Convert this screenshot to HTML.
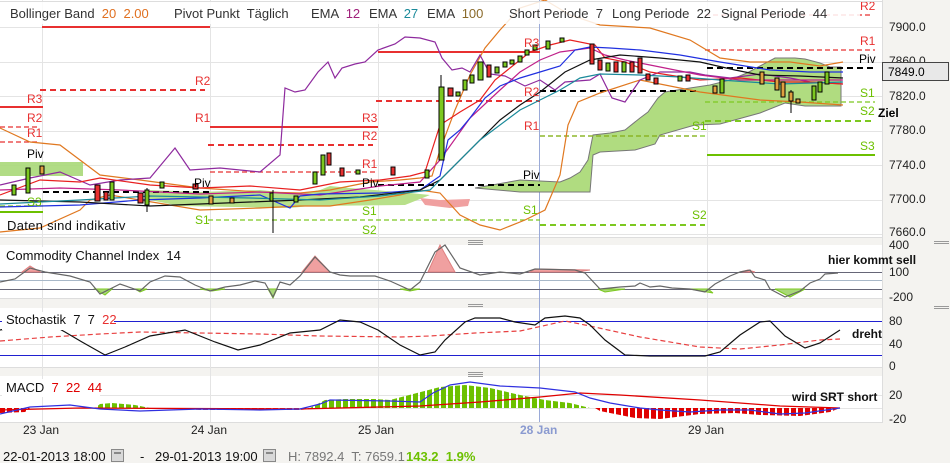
<!DOCTYPE html>
<html><head><meta charset="utf-8"><style>
body{margin:0;width:950px;height:463px;overflow:hidden;background:#f4f3f0;font-family:"Liberation Sans",sans-serif}
svg{position:absolute;left:0;top:0}
text{font-family:"Liberation Sans",sans-serif;white-space:pre}
</style></head><body>
<svg width="950" height="463" viewBox="0 0 950 463" xml:space="preserve">
<defs>
<pattern id="gb" width="7" height="10" patternUnits="userSpaceOnUse"><rect x="0" y="0" width="5" height="10" fill="#6cc000"/></pattern>
<pattern id="rb" width="7" height="10" patternUnits="userSpaceOnUse"><rect x="0" y="0" width="5" height="10" fill="#e00000"/></pattern>
</defs>
<rect x="0" y="0" width="882" height="237" fill="#fff"/>
<rect x="0" y="245" width="882" height="53" fill="#fff"/>
<rect x="0" y="308" width="882" height="59" fill="#fff"/>
<rect x="0" y="376" width="882" height="46" fill="#fff"/>
<line x1="0" y1="237.5" x2="882" y2="237.5" stroke="#ddd"/>
<line x1="0" y1="298.5" x2="882" y2="298.5" stroke="#ddd"/>
<line x1="0" y1="367.5" x2="882" y2="367.5" stroke="#ddd"/>
<line x1="0" y1="422.5" x2="882" y2="422.5" stroke="#ddd"/>
<line x1="882.5" y1="0" x2="882.5" y2="423" stroke="#ddd"/>
<g stroke="#999" stroke-width="1">
<line x1="468" y1="240.5" x2="483" y2="240.5"/><line x1="468" y1="242.5" x2="483" y2="242.5"/><line x1="468" y1="244.5" x2="483" y2="244.5"/>
<line x1="468" y1="304.5" x2="483" y2="304.5"/><line x1="468" y1="306.5" x2="483" y2="306.5"/>
<line x1="468" y1="372.5" x2="483" y2="372.5"/><line x1="468" y1="374.5" x2="483" y2="374.5"/><line x1="468" y1="376.5" x2="483" y2="376.5"/>
<line x1="934" y1="241.5" x2="949" y2="241.5"/><line x1="934" y1="243.5" x2="949" y2="243.5"/>
<line x1="934" y1="306.5" x2="949" y2="306.5"/><line x1="934" y1="308.5" x2="949" y2="308.5"/>
</g>
<g stroke="#e4e4e4" stroke-width="1">
<line x1="0" y1="27.5" x2="882" y2="27.5"/><line x1="0" y1="62.5" x2="882" y2="62.5"/><line x1="0" y1="96.5" x2="882" y2="96.5"/><line x1="0" y1="131.5" x2="882" y2="131.5"/><line x1="0" y1="165.5" x2="882" y2="165.5"/><line x1="0" y1="200.5" x2="882" y2="200.5"/><line x1="0" y1="234.5" x2="882" y2="234.5"/>
<line x1="42.5" y1="0" x2="42.5" y2="422"/><line x1="210.5" y1="0" x2="210.5" y2="422"/><line x1="378.5" y1="0" x2="378.5" y2="422"/><line x1="707.5" y1="0" x2="707.5" y2="422"/>
<line x1="0" y1="272.5" x2="882" y2="272.5"/><line x1="0" y1="280.5" x2="882" y2="280.5"/><line x1="0" y1="289.5" x2="882" y2="289.5"/>
<line x1="0" y1="344.5" x2="882" y2="344.5"/><line x1="0" y1="395.5" x2="882" y2="395.5"/><line x1="0" y1="408.5" x2="882" y2="408.5"/>
</g>
<line x1="539.5" y1="0" x2="539.5" y2="422" stroke="#9aaad8"/>
<path d="M0 162 L83 162 L83 176 L0 176Z" fill="#a8d878" opacity=".9"/>
<polygon points="150,190 200,192 260,190 300,194 320,190 330,186 350,188 410,193 430,195 405,205 310,206 290,208 180,206 150,200" fill="#b8e08a"/>
<polygon points="420,198 440,200 470,199 468,206 450,208 425,205" fill="#f0a0a0"/>
<polygon points="475,188 520,180 560,182 570,178 580,172 588,160 593,135 610,133 625,130 640,118 648,112 658,98 665,92 690,88 710,85 730,80 747,73 760,66 775,58 795,58 805,59 820,63 830,67 841,67 841,106 820,106 805,106 785,103 760,113 720,124 695,125 660,135 655,144 635,150 600,152 593,155 590,192 520,192" fill="#b0dc80" stroke="#777" stroke-width="1"/>
<g stroke-width="2" fill="none">
<line x1="42" y1="27" x2="210" y2="27" stroke="#e83030"/>
<line x1="0" y1="107" x2="43" y2="107" stroke="#e83030"/>
<line x1="210" y1="127" x2="378" y2="127" stroke="#e83030"/>
<line x1="378" y1="52" x2="540" y2="52" stroke="#e83030"/>
<line x1="0" y1="212" x2="43" y2="212" stroke="#6cc000"/>
<line x1="707" y1="155" x2="875" y2="155" stroke="#6cc000"/>
</g>
<g stroke-width="2" fill="none" stroke-dasharray="6,4">
<line x1="40" y1="90" x2="205" y2="90" stroke="#e83030"/>
<line x1="208" y1="145" x2="373" y2="145" stroke="#e83030"/>
<line x1="376" y1="101" x2="540" y2="101" stroke="#e83030"/>
<line x1="43" y1="192" x2="210" y2="192" stroke="#000"/>
<line x1="378" y1="185" x2="540" y2="185" stroke="#000"/>
<line x1="540" y1="91" x2="700" y2="91" stroke="#000"/>
<line x1="707" y1="68" x2="875" y2="68" stroke="#000"/>
<line x1="540" y1="225" x2="705" y2="225" stroke="#7cc820"/>
<line x1="705" y1="121" x2="875" y2="121" stroke="#7cc820"/>
</g>
<g stroke-width="1.3" fill="none" stroke-dasharray="5,3">
<line x1="0" y1="127" x2="40" y2="127" stroke="#e83030"/>
<line x1="0" y1="142" x2="40" y2="142" stroke="#e83030"/>
<line x1="210" y1="172" x2="378" y2="172" stroke="#e83030"/>
<line x1="540" y1="136" x2="700" y2="136" stroke="#e83030"/>
<line x1="705" y1="50" x2="875" y2="50" stroke="#e83030"/>
<line x1="705" y1="15" x2="872" y2="15" stroke="#e83030"/>
<line x1="208" y1="220" x2="540" y2="220" stroke="#7cc820"/>
<line x1="540" y1="136" x2="705" y2="136" stroke="#7cc820"/>
<line x1="705" y1="102" x2="875" y2="102" stroke="#7cc820"/>
<line x1="0" y1="206" x2="43" y2="206" stroke="#7cc820"/>
</g>
<g fill="none" stroke-width="1.2">
<polyline stroke="#e07820" points="0,128 30,142 60,145 80,160 100,175 140,180 200,188 260,192 300,193 330,190 370,182 400,180 420,178 432,176 440,150 455,110 470,75 485,48 500,30 520,8 545,0 570,15 600,25 650,28 690,40 720,58 750,62 790,62 820,66 843,62"/>
<polyline stroke="#e07820" points="0,232 40,228 80,210 90,200 110,195 200,210 260,208 300,206 330,206 370,200 400,195 420,190 440,193 460,215 480,225 500,230 525,220 545,210 560,175 568,125 578,102 600,93 640,80 700,92 760,100 800,102 843,105"/>
<polyline stroke="#8e2a9e" points="0,185 30,178 60,172 90,185 120,180 150,178 165,160 175,148 190,170 220,168 260,172 280,155 285,88 295,92 305,90 318,72 328,62 335,78 342,68 355,64 365,62 378,50 395,44 405,37 420,38 435,42 442,58 452,70 462,68 470,72 480,55 490,74 505,76 525,86 540,80 555,90 565,82 590,80 600,74 612,98 625,102 640,80 660,72 690,72 705,75 730,78 760,74 790,78 810,82 843,84"/>
<polyline stroke="#e82020" points="0,195 40,180 80,182 100,178 150,185 200,188 250,186 300,190 340,182 380,180 410,176 425,172 440,125 460,112 480,100 495,80 510,68 530,52 550,45 570,40 595,45 605,58 625,62 650,72 700,80 740,78 780,82 810,82 843,84"/>
<polyline stroke="#c0208a" points="0,190 60,188 120,190 200,194 260,192 320,195 380,186 420,182 440,160 470,118 500,90 520,72 540,60 560,52 590,48 605,55 625,60 650,65 700,75 740,80 790,80 843,80"/>
<polyline stroke="#2030e0" points="0,207 80,205 140,200 200,198 260,195 290,208 300,196 320,194 380,193 420,190 440,176 448,140 460,130 470,118 485,98 500,86 520,78 540,72 560,66 575,50 590,47 610,48 640,50 680,55 720,62 770,70 810,72 843,72"/>
<polyline stroke="#111" points="0,200 80,202 150,206 250,202 300,200 360,197 420,190 440,180 470,150 500,120 520,105 540,92 565,72 590,60 620,55 660,58 700,62 735,70 760,75 800,76 843,78"/>
<polyline stroke="#1a8a9a" points="0,204 80,200 150,196 250,198 320,200 380,196 430,190 450,170 480,140 520,110 540,100 560,90 580,78 600,74 640,75 680,77 720,80 780,84 843,82"/>
</g>
<g stroke="#000" stroke-width="1">
<line x1="441" y1="75" x2="441" y2="160"/><rect x="439" y="87" width="5" height="73" fill="#7cc820"/>
<rect x="448" y="88" width="5" height="8" fill="#e83030"/><rect x="456" y="92" width="4" height="4" fill="#7cc820"/>
<rect x="463" y="80" width="4" height="10" fill="#7cc820"/><rect x="470" y="75" width="4" height="8" fill="#7cc820"/>
<rect x="478" y="62" width="5" height="18" fill="#7cc820"/><rect x="487" y="65" width="4" height="12" fill="#e83030"/>
<rect x="495" y="67" width="4" height="6" fill="#7cc820"/><rect x="503" y="62" width="4" height="5" fill="#7cc820"/>
<rect x="510" y="60" width="4" height="4" fill="#7cc820"/><rect x="518" y="56" width="4" height="6" fill="#7cc820"/>
<rect x="525" y="50" width="4" height="5" fill="#7cc820"/><rect x="533" y="45" width="4" height="5" fill="#7cc820"/>
<rect x="546" y="41" width="4" height="8" fill="#7cc820"/><rect x="560" y="38" width="4" height="4" fill="#7cc820"/>
<rect x="590" y="44" width="4" height="20" fill="#e83030"/><rect x="598" y="60" width="4" height="10" fill="#e83030"/>
<rect x="606" y="63" width="4" height="8" fill="#7cc820"/><rect x="614" y="62" width="4" height="10" fill="#e83030"/>
<rect x="622" y="62" width="4" height="10" fill="#7cc820"/><rect x="630" y="62" width="4" height="10" fill="#e83030"/>
<rect x="638" y="58" width="4" height="15" fill="#e83030"/><rect x="646" y="74" width="4" height="6" fill="#e83030"/>
<rect x="654" y="78" width="4" height="6" fill="#e83030"/><rect x="678" y="76" width="4" height="5" fill="#7cc820"/>
<rect x="686" y="75" width="4" height="6" fill="#e83030"/><rect x="713" y="86" width="4" height="7" fill="#e0a040"/>
<rect x="720" y="79" width="4" height="14" fill="#7cc820"/><rect x="760" y="72" width="4" height="12" fill="#e0a040"/>
<rect x="775" y="78" width="4" height="12" fill="#e0a040"/><rect x="781" y="82" width="4" height="15" fill="#e0a040"/>
<line x1="791" y1="90" x2="791" y2="113"/><rect x="789" y="92" width="4" height="9" fill="#e0a040"/>
<rect x="796" y="99" width="4" height="4" fill="#e0a040"/><rect x="812" y="86" width="4" height="14" fill="#7cc820"/>
<rect x="818" y="82" width="4" height="10" fill="#7cc820"/><rect x="825" y="72" width="4" height="12" fill="#7cc820"/>
<rect x="26" y="168" width="4" height="25" fill="#7cc820"/><rect x="40" y="166" width="4" height="8" fill="#e0a040"/>
<rect x="12" y="185" width="4" height="10" fill="#7cc820"/>
<rect x="95" y="185" width="5" height="16" fill="#e83030"/><rect x="104" y="192" width="4" height="8" fill="#e83030"/>
<rect x="110" y="182" width="4" height="18" fill="#7cc820"/><rect x="138" y="193" width="5" height="10" fill="#e83030"/>
<line x1="147" y1="188" x2="147" y2="212"/><rect x="145" y="190" width="4" height="15" fill="#7cc820"/>
<rect x="160" y="182" width="4" height="6" fill="#7cc820"/><rect x="193" y="184" width="5" height="5" fill="#e83030"/>
<rect x="209" y="196" width="4" height="8" fill="#e0a040"/><rect x="230" y="198" width="4" height="5" fill="#e0a040"/>
<rect x="270" y="193" width="3" height="8" fill="#7cc820"/><line x1="273" y1="190" x2="273" y2="233"/>
<rect x="294" y="196" width="4" height="6" fill="#7cc820"/><rect x="313" y="172" width="4" height="12" fill="#7cc820"/>
<rect x="321" y="155" width="4" height="20" fill="#7cc820"/><rect x="327" y="153" width="4" height="12" fill="#e83030"/>
<rect x="340" y="168" width="4" height="8" fill="#e83030"/><rect x="356" y="170" width="4" height="4" fill="#7cc820"/>
<rect x="391" y="167" width="4" height="8" fill="#e83030"/><rect x="425" y="170" width="4" height="8" fill="#7cc820"/>
</g>
<g font-size="12" fill="#e83030">
<text x="195" y="85">R2</text><text x="27" y="103">R3</text><text x="27" y="122">R2</text><text x="27" y="137">R1</text>
<text x="195" y="122">R1</text><text x="362" y="122">R3</text><text x="362" y="140">R2</text><text x="362" y="168">R1</text>
<text x="524" y="47">R3</text><text x="524" y="96">R2</text><text x="524" y="130">R1</text>
<text x="860" y="45">R1</text><text x="860" y="10">R2</text>
</g>
<g font-size="12" fill="#000"><text x="27" y="158">Piv</text><text x="194" y="187">Piv</text><text x="362" y="187">Piv</text><text x="523" y="179">Piv</text><text x="859" y="63">Piv</text></g>
<g font-size="12" fill="#6cc000">
<text x="27" y="206">S3</text><text x="195" y="224">S1</text><text x="362" y="215">S1</text><text x="362" y="234">S2</text>
<text x="523" y="214">S1</text><text x="692" y="219">S2</text><text x="692" y="130">S1</text>
<text x="860" y="97">S1</text><text x="860" y="115">S2</text><text x="860" y="150">S3</text>
</g>
<text x="878" y="117" font-size="12" font-weight="bold" fill="#000">Ziel</text>
<text x="7" y="230" font-size="13" fill="#111" letter-spacing=".3">Daten sind indikativ</text>
<rect x="0" y="2" width="860" height="22" fill="#fff" opacity=".85"/>
<line x1="0" y1="1.5" x2="882" y2="1.5" stroke="#ddd"/>
<g font-size="13" fill="#333">
<text x="10" y="18">Bollinger Band  <tspan fill="#e07020">20  2.00</tspan></text>
<text x="174" y="18">Pivot Punkt  Täglich</text>
<text x="311" y="18">EMA  <tspan fill="#a0207a">12</tspan></text>
<text x="369" y="18">EMA  <tspan fill="#1a8a9a">27</tspan></text>
<text x="427" y="18">EMA  <tspan fill="#8a6a2a">100</tspan></text>
<text x="509" y="18">Short Periode  7</text>
<text x="612" y="18">Long Periode  22</text>
<text x="721" y="18">Signal Periode  44</text>
</g>
<line x1="42" y1="27" x2="210" y2="27" stroke="#e83030" stroke-width="2"/>
<g font-size="12" fill="#222">
<text x="889" y="31">7900.0</text><text x="889" y="65">7860.0</text><text x="889" y="100">7820.0</text><text x="889" y="134">7780.0</text><text x="889" y="169">7740.0</text><text x="889" y="203">7700.0</text><text x="889" y="236">7660.0</text>
<text x="889" y="249">400</text><text x="889" y="276">100</text><text x="889" y="301">-200</text>
<text x="889" y="325">80</text><text x="889" y="348">40</text><text x="889" y="370">0</text>
<text x="889" y="399">20</text><text x="889" y="423">-20</text>
</g>
<rect x="882.5" y="62.5" width="66" height="18" fill="#e8e8e8" stroke="#444"/>
<text x="888" y="76" font-size="12" fill="#000">7849.0</text>
<line x1="0" y1="272.5" x2="882" y2="272.5" stroke="#667"/><line x1="0" y1="289.5" x2="882" y2="289.5" stroke="#667"/><line x1="0" y1="280.5" x2="882" y2="280.5" stroke="#a8b8c8"/>
<g fill="#f0a0a0" stroke="#e08080"><polygon points="22,272 30,266 40,272"/><polygon points="302,272 315,256 330,272"/><polygon points="428,272 440,245 455,272"/><polygon points="530,272 535,269 590,270 577,272"/><polygon points="740,272 748,270 755,272"/></g>
<g fill="#a8d878" stroke="#7cc820"><polygon points="95,289 105,295 112,289"/><polygon points="135,289 140,292 147,289"/><polygon points="200,289 212,291 225,289"/><polygon points="268,289 273,298 277,289"/><polygon points="400,289 410,291 420,289"/><polygon points="598,289 605,292 625,289"/><polygon points="690,289 713,293 708,289"/><polygon points="775,289 790,297 805,289"/></g>
<polyline fill="none" stroke="#666" stroke-width="1.2" points="0,282 15,279 30,268 45,272 70,276 90,282 100,294 120,284 140,291 150,282 165,276 180,277 195,285 210,291 225,287 240,285 255,281 265,283 273,297 280,282 290,285 300,276 315,257 330,272 340,275 350,276 375,276 390,281 410,290 420,282 435,252 445,245 460,268 480,275 500,272 520,274 535,269 575,270 585,273 600,289 620,287 635,286 640,283 650,287 660,286 672,288 690,289 705,292 715,284 730,276 740,272 750,270 755,277 765,280 770,289 785,297 800,291 810,283 820,279 825,274 838,273"/>
<line x1="0" y1="321.5" x2="882" y2="321.5" stroke="#2020d0"/><line x1="0" y1="355.5" x2="882" y2="355.5" stroke="#2020d0"/>
<polyline fill="none" stroke="#e84040" stroke-width="1.2" stroke-dasharray="5,3" points="0,341 50,337 100,334 140,332 200,333 260,334 320,336 400,337 430,336 475,333 520,331 565,321 590,326 640,337 700,347 740,349 780,345 820,340 840,339"/>
<polyline fill="none" stroke="#111" stroke-width="1.2" points="0,330 20,326 40,318 65,332 82,342 105,355 125,347 150,336 185,330 215,342 238,350 260,345 290,333 320,330 340,320 360,322 378,330 400,345 420,355 435,352 445,340 465,322 475,318 500,318 515,322 535,325 545,318 565,316 580,318 590,325 605,340 625,355 650,356 680,356 705,356 720,352 740,335 760,322 770,321 785,336 805,348 820,343 840,330"/>
<polygon points="95,408 100,404 112,403 135,405 150,408" fill="url(#gb)"/>
<polygon points="310,408 325,400 345,399 375,399 390,400 440,387 465,385 490,388 520,395 545,400 570,403 590,408" fill="url(#gb)"/>
<polygon points="595,408 660,408 700,408 760,408 800,408 840,408 830,412 800,416 760,415 735,413 700,414 660,419 635,418 600,411" fill="url(#rb)"/>
<polygon points="0,408 30,408 25,412 0,413" fill="url(#rb)"/>
<polygon points="170,408 320,408 300,410 200,410" fill="url(#rb)" opacity=".8"/>
<polyline fill="none" stroke="#e00000" stroke-width="1.3" points="0,410 80,408 300,409 420,406 480,402 540,397 580,393 620,395 700,400 780,406 840,408"/>
<polyline fill="none" stroke="#3030e0" stroke-width="1.2" points="0,414 30,407 70,405 100,409 140,411 200,409 260,410 300,409 320,404 330,400 390,401 420,402 433,393 450,385 470,382 500,386 540,388 575,392 590,398 610,403 640,408 660,410 690,412 720,410 750,410 780,414 805,413 840,408"/>
<rect x="2" y="247" width="175" height="18" fill="#fff"/>
<rect x="2" y="312" width="112" height="18" fill="#fff"/>
<rect x="2" y="379" width="98" height="18" fill="#fff"/>
<g font-size="13" fill="#111">
<text x="6" y="260">Commodity Channel Index  14</text>
<text x="6" y="324">Stochastik  7  7  <tspan fill="#e83030">22</tspan></text>
<text x="6" y="392">MACD  <tspan fill="#e00000">7  22  44</tspan></text>
</g>
<g font-size="12" font-weight="bold" fill="#111">
<text x="828" y="264">hier kommt sell</text><text x="852" y="338">dreht</text><text x="792" y="401">wird SRT short</text>
</g>
<g font-size="12" fill="#222"><text x="23" y="434">23 Jan</text><text x="191" y="434">24 Jan</text><text x="358" y="434">25 Jan</text><text x="688" y="434">29 Jan</text></g>
<text x="520" y="434" font-size="12" font-weight="bold" fill="#8a9ad0">28 Jan</text>
<g font-size="13" fill="#111"><text x="3" y="461">22-01-2013 18:00</text><text x="140" y="461">-</text><text x="155" y="461">29-01-2013 19:00</text></g>
<g fill="#d8d8d8" stroke="#888"><rect x="111.5" y="449.5" width="12" height="12"/><rect x="263.5" y="449.5" width="12" height="12"/></g>
<g fill="#888"><rect x="114" y="452" width="7" height="2"/><rect x="266" y="452" width="7" height="2"/></g>
<text x="288" y="461" font-size="13" fill="#777">H: 7892.4  T: 7659.1</text>
<text x="406" y="461" font-size="13" font-weight="bold" fill="#6cc000">143.2  1.9%</text>
</svg>
</body></html>
